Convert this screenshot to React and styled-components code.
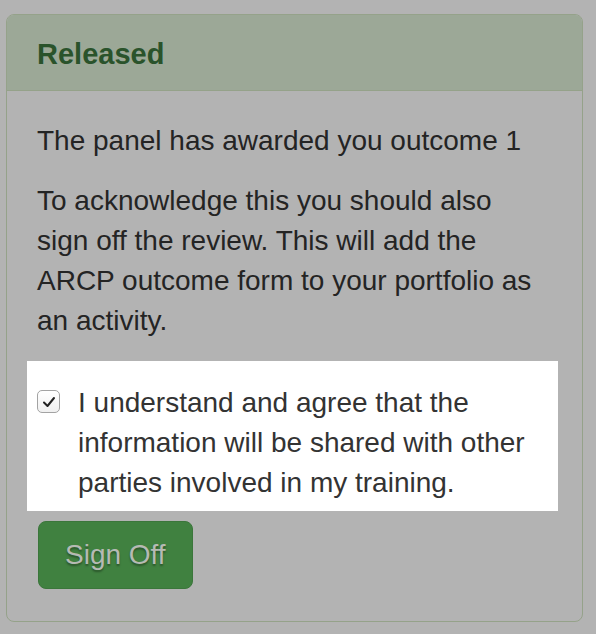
import React from 'react';
import styled, { createGlobalStyle } from 'styled-components';

const GlobalStyle = createGlobalStyle`
  body {
    margin: 0;
    background: #b3b3b3;
    font-family: "Liberation Sans", Arial, sans-serif;
  }
`;

const Page = styled.div`
  padding: 14px 0 0 6px;
`;

const Panel = styled.div`
  width: 577px;
  box-sizing: border-box;
  border: 1px solid #95a28a;
  border-radius: 8px;
  overflow: hidden;
`;

const PanelHeader = styled.div`
  background: #9ca897;
  border-bottom: 1px solid #95a28a;
  padding: 22px 30px 18px;
`;

const PanelTitle = styled.h3`
  margin: 0;
  font-size: 29px;
  line-height: 35px;
  font-weight: bold;
  color: #2a532b;
`;

const PanelBody = styled.div`
  padding: 30px 30px 32px;
`;

const Text = styled.p`
  margin: 0 0 20px;
  font-size: 28px;
  line-height: 40px;
  color: #242424;
`;

const Highlight = styled.div`
  display: flex;
  align-items: flex-start;
  gap: 18px;
  margin: 0 -6px 0 -10px;
  padding: 22px 10px 8px;
  background: #fff;
`;

const CheckBox = styled.span`
  flex: none;
  width: 23px;
  height: 23px;
  margin-top: 7px;
  box-sizing: border-box;
  border: 1px solid #a3a3a3;
  border-radius: 5px;
  background: linear-gradient(#ffffff, #f0f0f0);
  display: flex;
  align-items: center;
  justify-content: center;
`;

const Label = styled.label`
  font-size: 28px;
  line-height: 40px;
  color: #333;
`;

const SignOffButton = styled.button`
  margin: 10px 0 0 1px;
  padding: 13px 26px;
  background: #408140;
  border: 1px solid #3b763b;
  border-radius: 8px;
  font-family: inherit;
  font-size: 28px;
  line-height: 40px;
  color: #b6bab4;
  text-shadow: 0 2px 2px rgba(0, 0, 0, 0.35);
  cursor: pointer;
`;

export default function App() {
  return (
    <Page>
      <GlobalStyle />
      <Panel>
        <PanelHeader>
          <PanelTitle>Released</PanelTitle>
        </PanelHeader>
        <PanelBody>
          <Text>The panel has awarded you outcome 1</Text>
          <Text>
            To acknowledge this you should also<br />
            sign off the review. This will add the<br />
            ARCP outcome form to your portfolio as<br />
            an activity.
          </Text>
          <Highlight>
            <CheckBox>
              <svg width="16" height="16" viewBox="0 0 16 16">
                <polyline points="3,8.5 6.5,12 13,4" fill="none" stroke="#222" strokeWidth="2" strokeLinecap="round" strokeLinejoin="round" />
              </svg>
            </CheckBox>
            <Label>
              I understand and agree that the<br />
              information will be shared with other<br />
              parties involved in my training.
            </Label>
          </Highlight>
          <SignOffButton>Sign Off</SignOffButton>
        </PanelBody>
      </Panel>
    </Page>
  );
}
